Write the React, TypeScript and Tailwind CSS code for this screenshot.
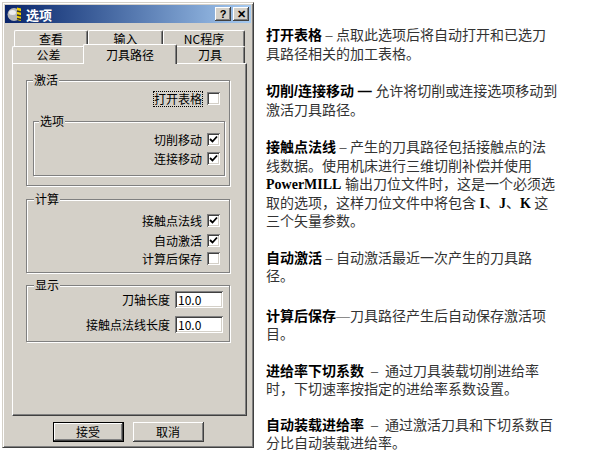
import type { ReactNode } from "react";

function cn(...parts: (string | false | undefined)[]) {
  return parts.filter(Boolean).join(" ");
}

function Check() {
  return (
    <svg width="9" height="9" viewBox="0 0 9 9" className="block">
      <path d="M1 4 L3.5 6.5 L8 1.5" fill="none" stroke="#000" strokeWidth="1.8" />
    </svg>
  );
}

function Checkbox({ checked }: { checked?: boolean }) {
  return (
    <span className="flex h-[13px] w-[13px] shrink-0 items-center justify-center bg-white shadow-[inset_1px_1px_0_#808080,inset_-1px_-1px_0_#fff,inset_2px_2px_0_#404040,inset_-2px_-2px_0_#d4d0c8]">
      {checked ? <Check /> : null}
    </span>
  );
}

function CheckRow({ label, checked, focus, className }: { label: string; checked?: boolean; focus?: boolean; className?: string }) {
  return (
    <div className={cn("flex h-[13px] items-center justify-end gap-[5px] leading-[14px]", className)}>
      <span className={focus ? "outline-1 outline-dotted outline-black" : undefined}>{label}</span>
      <Checkbox checked={checked} />
    </div>
  );
}

function Group({ label, className, children, labelLeft = "left-[6px]" }: { label: string; className?: string; children: ReactNode; labelLeft?: string }) {
  return (
    <div className={cn("relative border border-[#808080] shadow-[inset_1px_1px_0_#fff,1px_1px_0_#fff]", className)}>
      <span className={cn("absolute -top-[8px] bg-[#d4d0c8] px-[1px] leading-[14px]", labelLeft)}>{label}</span>
      {children}
    </div>
  );
}

function Field({ label, value, className }: { label: string; value: string; className?: string }) {
  return (
    <div className={cn("flex items-center justify-end gap-[5px]", className)}>
      <span className="leading-[14px]">{label}</span>
      <span className="flex h-[17px] w-[48px] items-center bg-white pl-[3px] text-[12px] shadow-[inset_1px_1px_0_#808080,inset_-1px_-1px_0_#fff,inset_2px_2px_0_#404040,inset_-2px_-2px_0_#d4d0c8]">
        {value}
      </span>
    </div>
  );
}

function Tab({ label, width, active }: { label: string; width: string; active?: boolean }) {
  return (
    <div
      className={cn(
        "flex items-center justify-center rounded-t-[2px] border-t border-l border-r border-t-white border-l-white border-r-[#404040] shadow-[inset_-1px_0_0_#808080] bg-[#d4d0c8]",
        width,
        active && "relative z-10 -mx-[2px] -mt-[2px] -mb-[1px]",
      )}
    >
      {label}
    </div>
  );
}

function Btn({ label, primary }: { label: string; primary?: boolean }) {
  return (
    <button
      type="button"
      className={cn(
        "flex h-[20px] w-[71px] items-center justify-center bg-[#d4d0c8] text-[12px] shadow-[inset_-1px_-1px_0_#404040,inset_1px_1px_0_#fff,inset_-2px_-2px_0_#808080,inset_2px_2px_0_#d4d0c8]",
        primary && "border border-black",
      )}
    >
      {label}
    </button>
  );
}

function Dialog() {
  return (
    <div className="ml-[2px] mt-[2px] flex h-[446px] w-[252px] shrink-0 flex-col border border-t-[#d4d0c8] border-l-[#d4d0c8] border-r-[#404040] border-b-[#404040] bg-[#d4d0c8] p-[2px] text-[12px] text-black shadow-[inset_1px_1px_0_#fff,inset_-1px_-1px_0_#808080] font-['Noto_Sans_CJK_SC','Liberation_Sans',sans-serif]">
      <div className="flex h-[18px] items-center bg-gradient-to-r from-[#0a246a] to-[#a6caf0] pl-[2px] pr-[2px]">
        <svg width="16" height="16" viewBox="0 0 16 16" className="shrink-0">
          <circle cx="7" cy="8.5" r="6.5" fill="#b8b8b8" />
          <ellipse cx="5.5" cy="6.5" rx="3.5" ry="2.5" fill="#ececec" />
          <path d="M10 1.5 L14 2.5 L14 15 L10 14 Z" fill="#f2d000" />
          <path d="M10 5 L14 6 M10 9 L14 10 M10 12.5 L14 13.5" stroke="#303030" strokeWidth="1.4" />
        </svg>
        <span className="ml-[3px] text-[13px] font-bold leading-none text-white">选项</span>
        <div className="ml-auto flex gap-[2px]">
          {["?", "✕"].map((s) => (
            <span
              key={s}
              className="flex h-[14px] w-[16px] items-center justify-center bg-[#d4d0c8] text-[11px] font-bold leading-none text-black shadow-[inset_-1px_-1px_0_#404040,inset_1px_1px_0_#fff,inset_-2px_-2px_0_#808080] font-['Liberation_Sans',sans-serif]"
            >
              {s}
            </span>
          ))}
        </div>
      </div>

      <div className="ml-[7px] mt-[7px] w-[235px]">
        <div className="flex h-[16px] pl-[2px]">
          <Tab label="查看" width="w-[74px]" />
          <Tab label="输入" width="w-[75px]" />
          <Tab label="NC程序" width="w-[82px]" />
        </div>
        <div className="flex h-[17px]">
          <Tab label="公差" width="w-[73px]" />
          <Tab label="刀具路径" width="w-[94px]" active />
          <Tab label="刀具" width="w-[70px]" />
        </div>

        <div className="h-[353px] border border-t-white border-l-white border-r-[#404040] border-b-[#404040] pl-[13px] pt-[16px] shadow-[inset_-1px_-1px_0_#808080]">
          <Group label="激活" className="h-[106px] w-[204px] pr-[9px] pt-[11px]">
            <CheckRow label="打开表格" focus />
            <Group label="选项" labelLeft="left-[5px]" className="ml-[6px] mr-[-5px] mt-[16px] h-[55px] pr-[4px] pt-[11px]">
              <CheckRow label="切削移动" checked />
              <CheckRow label="连接移动" checked className="mt-[6px]" />
            </Group>
          </Group>

          <Group label="计算" labelLeft="left-[7px]" className="mt-[13px] h-[74px] w-[204px] pr-[9px] pt-[14px]">
            <CheckRow label="接触点法线" checked />
            <CheckRow label="自动激活" checked className="mt-[7px]" />
            <CheckRow label="计算后保存" className="mt-[5px]" />
          </Group>

          <Group label="显示" labelLeft="left-[7px]" className="mt-[12px] h-[57px] w-[204px] pr-[6px] pt-[5px]">
            <Field label="刀轴长度" value="10.0" />
            <Field label="接触点法线长度" value="10.0" className="mt-[8px]" />
          </Group>
        </div>
      </div>

      <div className="mt-[6px] flex justify-center gap-[9px]">
        <Btn label="接受" primary />
        <Btn label="取消" />
      </div>
    </div>
  );
}

const head = "font-bold text-black font-['Liberation_Sans','Noto_Sans_CJK_SC',sans-serif]";
const latin = "font-bold text-black font-['Liberation_Serif',serif]";

function Para({ className, children }: { className?: string; children: ReactNode }) {
  return <div className={cn("whitespace-nowrap", className)}>{children}</div>;
}

export default function App() {
  return (
    <div className="flex h-[450px] w-[591px] overflow-hidden bg-white">
      <Dialog />
      <div className="ml-[12px] pt-[26px] text-[14px] leading-[18.5px] text-[#333] font-['Liberation_Serif','Noto_Sans_CJK_SC',serif]">
        <Para>
          <span className={head}>打开表格</span> – 点取此选项后将自动打开和已选刀
          <br />
          具路径相关的加工表格。
        </Para>
        <Para className="mt-[18px]">
          <span className={head}>切削/连接移动 —</span> 允许将切削或连接选项移动到
          <br />
          激活刀具路径。
        </Para>
        <Para className="mt-[18px]">
          <span className={head}>接触点法线</span> – 产生的刀具路径包括接触点的法
          <br />
          线数据。使用机床进行三维切削补偿并使用
          <br />
          <span className={latin}>PowerMILL</span> 输出刀位文件时，这是一个必须选
          <br />
          取的选项，这样刀位文件中将包含 <span className={latin}>I</span>、<span className={latin}>J</span>、<span className={latin}>K</span> 这
          <br />
          三个矢量参数。
        </Para>
        <Para className="mt-[17px]">
          <span className={head}>自动激活</span> – 自动激活最近一次产生的刀具路
          <br />
          径。
        </Para>
        <Para className="mt-[20px]">
          <span className={head}>计算后保存</span>—刀具路径产生后自动保存激活项
          <br />
          目。
        </Para>
        <Para className="mt-[17px]">
          <span className={head}>进给率下切系数</span>&nbsp;&nbsp;–&nbsp;&nbsp;通过刀具装载切削进给率
          <br />
          时，下切速率按指定的进给率系数设置。
        </Para>
        <Para className="mt-[16px]">
          <span className={head}>自动装载进给率</span>&nbsp;&nbsp;–&nbsp;&nbsp;通过激活刀具和下切系数百
          <br />
          分比自动装载进给率。
        </Para>
      </div>
    </div>
  );
}
